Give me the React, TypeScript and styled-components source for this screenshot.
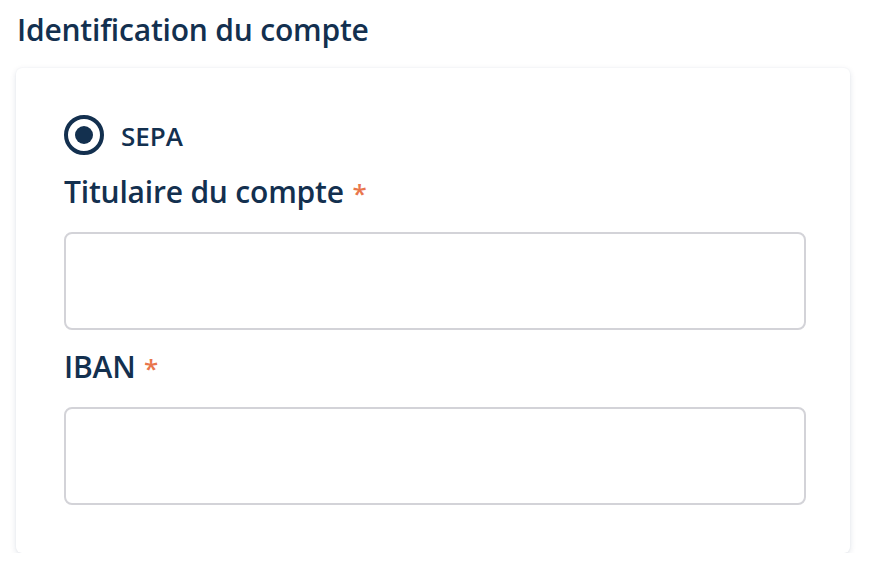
import styled, { createGlobalStyle } from "styled-components";

const GlobalStyle = createGlobalStyle`
  body {
    margin: 0;
    background: #ffffff;
    font-family: "Open Sans", "Lato", sans-serif;
    font-variant-ligatures: none;
    color: #13304f;
  }
`;

export default function App() {
  return (
    <Page>
      <GlobalStyle />
      <SectionTitle>Identification du compte</SectionTitle>
      <Card>
        <RadioRow>
          <RadioOuter>
            <RadioDot />
          </RadioOuter>
          <RadioLabel>SEPA</RadioLabel>
        </RadioRow>
        <Field>
          <Label>
            Titulaire du compte <Required>*</Required>
          </Label>
          <Input />
        </Field>
        <Field>
          <Label>
            IBAN <Required>*</Required>
          </Label>
          <Input />
        </Field>
      </Card>
    </Page>
  );
}

const Page = styled.div`
  padding: 11px 20px 0 16px;
  width: 834px;
`;

const SectionTitle = styled.h2`
  margin: 0 0 19px 1px;
  font-size: 30px;
  font-weight: 600;
  line-height: 38px;
  letter-spacing: -0.2px;
`;

const Card = styled.div`
  display: flex;
  flex-direction: column;
  padding: 47px 44px 48px 48px;
  border-radius: 6px;
  background: #ffffff;
  box-shadow: 0 2px 6px rgba(20, 40, 80, 0.12), 0 0 2px rgba(20, 40, 80, 0.06);
`;

const RadioRow = styled.div`
  display: flex;
  align-items: center;
  gap: 17px;
  height: 40px;
`;

const RadioOuter = styled.span`
  display: flex;
  align-items: center;
  justify-content: center;
  box-sizing: border-box;
  width: 40px;
  height: 40px;
  border: 4.5px solid #13304f;
  border-radius: 50%;
`;

const RadioDot = styled.span`
  width: 18px;
  height: 18px;
  border-radius: 50%;
  background: #13304f;
`;

const RadioLabel = styled.span`
  font-size: 26px;
  font-weight: 600;
  padding-top: 2px;
`;

const Field = styled.div`
  display: flex;
  flex-direction: column;
  margin-top: 17px;
`;

const Label = styled.label`
  font-size: 30px;
  font-weight: 600;
  line-height: 40px;
  margin-bottom: 19px;
  letter-spacing: -0.2px;
`;

const Required = styled.span`
  color: #e9764c;
  font-size: 26px;
  margin-left: 1px;
`;

const Input = styled.input`
  box-sizing: border-box;
  height: 98px;
  border: 2px solid #d3d3d8;
  border-radius: 8px;
  outline: none;
  background: #ffffff;
`;
